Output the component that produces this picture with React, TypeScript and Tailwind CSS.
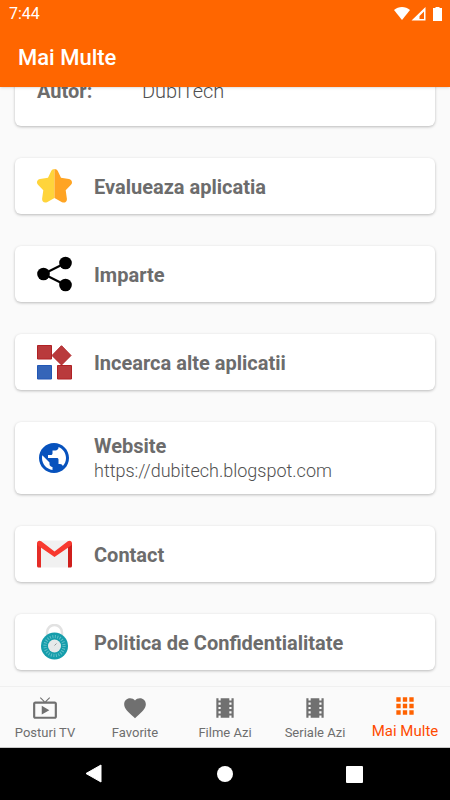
import type { ReactNode } from "react";

function StarIcon() {
  return (
    <svg viewBox="0 0 36 36" className="size-9 shrink-0" aria-hidden="true">
      <path
        d="M18.500 1c-1.500 0-2.700.8-3.300 2L12 9.800l-8 1.300C1.200 11.600 0 14.600 2 16.800l5.300 5.500-1.200 8.400c-.3 3 2.300 4.700 4.900 3.500l7.500-4.200z"
        fill="#ffd43b"
      />
      <path
        d="M18.500 1c1.500 0 2.700.8 3.300 2L25 9.800l8 1.300c2.800.5 4 3.500 2 5.700l-5.300 5.500 1.200 8.400c.3 3-2.300 4.700-4.900 3.500L18.500 30z"
        fill="#ffa423"
      />
    </svg>
  );
}

function ShareIcon() {
  return (
    <svg viewBox="0 0 36 36" className="size-9 shrink-0" aria-hidden="true">
      <path d="M29.500 7 7.500 18l22 11" fill="none" stroke="#000" strokeWidth="2.200" />
      <circle cx="29.500" cy="7" r="6.300" />
      <circle cx="7.500" cy="18" r="6.300" />
      <circle cx="29.500" cy="29" r="6.300" />
    </svg>
  );
}

function WidgetsIcon() {
  return (
    <svg viewBox="0 0 36 36" className="size-9 shrink-0" aria-hidden="true">
      <g fill="#b93a3c" stroke="#b02124">
        <path d="M1.500 1.500h14v13.500h-14z" />
        <path d="M25.500 1.700 35 11.500 25.500 21 16 11.500z" />
        <path d="M21.500 21.500h14V35h-14z" />
      </g>
      <path d="M1.500 21.500h14V35h-14z" fill="#3565b8" stroke="#2257b5" />
    </svg>
  );
}

function GlobeIcon() {
  return (
    <svg viewBox="0 0 24 24" className="size-9 shrink-0" fill="#0752bd" aria-hidden="true">
      <path d="M12 2C6.480 2 2 6.480 2 12s4.480 10 10 10 10-4.480 10-10S17.520 2 12 2zm-1 17.930c-3.950-.49-7-3.850-7-7.930 0-.62.08-1.210.21-1.790L9 15v1c0 1.100.9 2 2 2v1.930zm6.900-2.540c-.26-.81-1-1.390-1.900-1.390h-1v-3c0-.55-.45-1-1-1H8v-2h2c.55 0 1-.45 1-1V7h2c1.100 0 2-.9 2-2v-.41c2.930 1.190 5 4.060 5 7.410 0 2.080-.8 3.970-2.100 5.390z" />
    </svg>
  );
}

function MailIcon() {
  return (
    <svg viewBox="0 0 36 36" className="size-9 shrink-0" aria-hidden="true">
      <path d="M3 4.500h30v27H3z" fill="#f1f1f1" />
      <path d="M1 7h4v24.500H2.500c-.9 0-1.500-.6-1.500-1.500z" fill="#e52d27" />
      <path d="M32 7h4v23c0 .9-.6 1.500-1.500 1.500H32z" fill="#cf1f1c" />
      <path
        d="M1 7.500c0-2.600 2.300-3.500 4.200-2.200L18.500 15.600 31.800 5.300C33.700 4 36 4.900 36 7.500c0 .9-.4 1.700-1.200 2.200L18.500 21 2.200 9.700C1.400 9.200 1 8.400 1 7.500z"
        fill="#f8392f"
      />
    </svg>
  );
}

function LockIcon() {
  return (
    <svg viewBox="0 0 36 36" className="size-9 shrink-0" aria-hidden="true">
      <path
        d="M11 13V8.500a7.500 7.500 0 0 1 15 0V13"
        fill="none"
        stroke="#e2e2e2"
        strokeWidth="2.500"
      />
      <circle cx="18.500" cy="22" r="13.500" fill="#159dab" />
      <circle
        cx="18.500"
        cy="22"
        r="9.500"
        fill="none"
        stroke="#62bfc8"
        strokeWidth="3.200"
        strokeDasharray="1 1.490"
      />
      <circle cx="18.500" cy="22" r="6.500" fill="#e6e9ea" />
      <path d="m18.500 21.500 2-2" stroke="#9a9a9a" />
    </svg>
  );
}

const ITEMS: { title: string; detail?: string; icon: ReactNode }[] = [
  { title: "Evalueaza aplicatia", icon: <StarIcon /> },
  { title: "Imparte", icon: <ShareIcon /> },
  { title: "Incearca alte aplicatii", icon: <WidgetsIcon /> },
  { title: "Website", detail: "https://dubitech.blogspot.com", icon: <GlobeIcon /> },
  { title: "Contact", icon: <MailIcon /> },
  { title: "Politica de Confidentialitate", icon: <LockIcon /> },
];

const FILM =
  "M18 3v2h-2V3H8v2H6V3H4v18h2v-2h2v2h8v-2h2v2h2V3h-2zM8 17H6v-2h2v2zm0-4H6v-2h2v2zm0-4H6V7h2v2zm10 8h-2v-2h2v2zm0-4h-2v-2h2v2zm0-4h-2V7h2v2z";

const TABS = [
  {
    label: "Posturi TV",
    path: "M21 6h-7.590l3.290-3.290L16 2l-4 4-4-4-.7.71L10.590 6H3c-1.100 0-2 .89-2 2v12c0 1.100.9 2 2 2h18c1.100 0 2-.9 2-2V8c0-1.110-.9-2-2-2zm0 14H3V8h18v12zM9 10v8l7-4z",
  },
  {
    label: "Favorite",
    path: "M12 21.350l-1.450-1.320C5.400 15.360 2 12.280 2 8.500 2 5.420 4.420 3 7.500 3c1.740 0 3.410.81 4.500 2.090C13.090 3.810 14.760 3 16.500 3 19.580 3 22 5.420 22 8.500c0 3.780-3.400 6.860-8.550 11.540L12 21.350z",
  },
  { label: "Filme Azi", path: FILM },
  { label: "Seriale Azi", path: FILM },
  {
    label: "Mai Multe",
    active: true,
    path: "M4 8h4V4H4v4zm6 12h4v-4h-4v4zm-6 0h4v-4H4v4zm0-6h4v-4H4v4zm6 0h4v-4h-4v4zm6-10v4h4V4h-4zm-6 4h4V4h-4v4zm6 6h4v-4h-4v4zm0 6h4v-4h-4v4z",
  },
];

function Header() {
  return (
    <header className="relative z-10 bg-[#ff6600] text-white shadow-sm">
      <div className="flex h-7 items-center justify-between pl-[9px] pr-2">
        <span className="text-base">7:44</span>
        <svg viewBox="0 0 48 16" className="h-4 w-12" fill="#fff" aria-hidden="true">
          <path d="M0 4c4.500-4 11.500-4 16 0L8 14z" />
          <path d="M31.500 1v13.500H17.500zM30 5.500l-4.500 4.500v3H30z" fillRule="evenodd" />
          <path d="M41.500 1h4v1H48v13h-9V2h2.500z" />
        </svg>
      </div>
      <h1 className="flex h-[59px] items-center pl-[18px] text-[22px] font-medium">Mai Multe</h1>
    </header>
  );
}

function BottomNav() {
  return (
    <nav className="grid h-[62px] grid-cols-5 border-t border-[#f0f0f0] border-b border-b-[#c8c8c8] bg-[#fafafa]">
      {TABS.map((tab) => (
        <a
          key={tab.label}
          href="#"
          aria-current={tab.active ? "page" : undefined}
          className={
            tab.active
              ? "flex flex-col items-center pt-1.5 text-[15px] leading-6 text-[#ff4a00]"
              : "flex flex-col items-center pt-2 text-[13px] leading-6 text-[#6e6e6e]"
          }
        >
          <svg
            viewBox="0 0 24 24"
            className="size-[26px] shrink-0"
            fill={tab.active ? "#ff6200" : "#707070"}
            aria-hidden="true"
          >
            <path d={tab.path} />
          </svg>
          <span className="whitespace-nowrap">{tab.label}</span>
        </a>
      ))}
    </nav>
  );
}

function SystemBar() {
  return (
    <div className="grid h-[52px] grid-cols-[1fr_72px_1fr] items-center bg-black">
      <button aria-label="Back" className="justify-self-end pr-[86px]">
        <svg viewBox="0 0 18 20" className="h-5 w-[18px]" fill="#fff">
          <path d="M16 1v17L1 9.500z" stroke="#fff" strokeLinejoin="round" />
        </svg>
      </button>
      <button aria-label="Home" className="justify-self-center">
        <span className="block size-4 rounded-full bg-white" />
      </button>
      <button aria-label="Recents" className="justify-self-start pl-[85px]">
        <span className="block size-[17px] rounded-[1px] bg-white" />
      </button>
    </div>
  );
}

export default function App() {
  return (
    <div className="flex min-h-screen flex-col bg-[#fafafa] font-[Roboto,sans-serif]">
      <Header />

      <main className="flex flex-1 flex-col gap-8 px-[15px] pb-4 text-xl leading-6 text-[#6c6c6c]">
        {/* Author card, partly scrolled under the header */}
        <dl className="-mt-2 flex rounded-md bg-white pb-[23px] pl-[22px] shadow-[0_1px_3px_rgba(0,0,0,0.26)]">
          <dt className="w-[105px] font-bold">Autor:</dt>
          <dd className="font-light text-[#505050]">DubiTech</dd>
        </dl>

        {ITEMS.map((item) => (
          <button
            key={item.title}
            className={`flex items-center gap-[22px] rounded-md bg-white pl-[21px] text-left shadow-[0_1px_3px_rgba(0,0,0,0.26)] ${
              item.detail ? "h-[72px]" : "h-14"
            }`}
          >
            {item.icon}
            <span className="pt-0.5">
              <span className="block font-bold">{item.title}</span>
              {item.detail && (
                <span className="block text-lg leading-[26px] font-light text-[#505050]">
                  {item.detail}
                </span>
              )}
            </span>
          </button>
        ))}
      </main>

      <BottomNav />
      <SystemBar />
    </div>
  );
}
